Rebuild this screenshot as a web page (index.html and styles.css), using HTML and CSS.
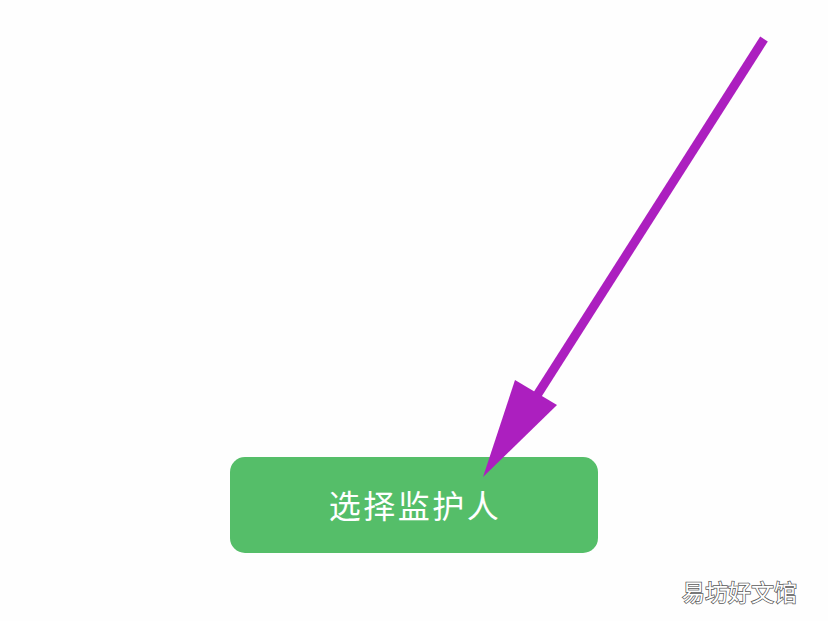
FILE: index.html
```html
<!DOCTYPE html>
<html lang="zh">
<head>
<meta charset="utf-8">
<title>选择监护人</title>
<link rel="stylesheet" href="styles.css">
</head>
<body>
<main class="page">
  <button class="btn">选择监护人</button>
</main>
<svg class="arrow" width="828" height="621" viewBox="0 0 828 621">
  <line x1="764" y1="39" x2="520" y2="422" stroke="#ac1fbf" stroke-width="9"/>
  <polygon points="515,380 557,405 483,477" fill="#ac1fbf"/>
</svg>
<div class="watermark">易坊好文馆</div>
</body>
</html>
```
FILE: styles.css
```css
html, body {
  margin: 0;
  padding: 0;
  background: #fefefe;
  width: 828px;
  height: 621px;
  overflow: hidden;
}
.page {
  padding-top: 457px;
  padding-left: 230px;
}
.btn {
  display: flex;
  align-items: center;
  justify-content: center;
  width: 368px;
  height: 96px;
  border: none;
  border-radius: 15px;
  background: #55be69;
  color: #ffffff;
  font-family: "Noto Sans CJK SC", sans-serif;
  font-size: 32px;
  font-weight: 400;
  letter-spacing: 2.5px;
  padding: 0 0 2px 2px;
}
.arrow {
  position: absolute;
  left: 0;
  top: 0;
}
.watermark {
  position: absolute;
  left: 682px;
  top: 574px;
  font-family: "Noto Sans CJK SC", sans-serif;
  font-size: 23px;
  color: #ffffff;
  -webkit-text-stroke: 1.5px #5a5a5a;
  paint-order: stroke fill;
}
```
